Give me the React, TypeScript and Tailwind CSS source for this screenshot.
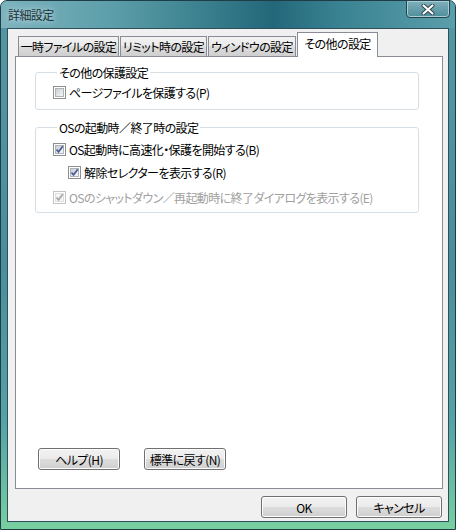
import React from "react";

type CheckProps = { checked?: boolean; disabled?: boolean };

const Check: React.FC<CheckProps> = ({ checked, disabled }) => (
  <span
    className={`flex h-[13px] w-[13px] shrink-0 items-center justify-center border bg-white ${
      disabled ? "border-[#c4c4c4]" : "border-[#8e8f8f]"
    }`}
  >
    <span
      className={`relative flex h-[9px] w-[9px] items-center justify-center border ${
        disabled
          ? "border-[#e0e0e0] bg-[#f4f4f4]"
          : "border-[#aeb3b9] bg-[linear-gradient(135deg,#cbcfd5,#f6f6f6)]"
      }`}
    >
      {checked && (
        <svg width="9" height="9" viewBox="0 0 9 9" className="absolute left-[-1px] top-[-1px]">
          <path
            d="M1.5 4.5 L3.5 6.8 L7.8 1.2"
            fill="none"
            stroke={disabled ? "#a8a8a8" : "#4a5f97"}
            strokeWidth="1.8"
          />
        </svg>
      )}
    </span>
  </span>
);

type RowProps = CheckProps & { label: string; indent?: boolean; className?: string };

const Row: React.FC<RowProps> = ({ label, checked, disabled, indent, className }) => (
  <div className={`flex h-[15px] items-center gap-[3px] ${indent ? "pl-[15px]" : ""} ${className ?? ""}`}>
    <Check checked={checked} disabled={disabled} />
    <span className={`whitespace-nowrap ${disabled ? "text-[#a0a0a0]" : "text-black"}`}>{label}</span>
  </div>
);

const Button: React.FC<{ label: string; className?: string }> = ({ label, className }) => (
  <button
    className={`flex h-[22px] items-center justify-center whitespace-nowrap rounded-[3px] border border-[#707070] bg-[linear-gradient(to_bottom,#f2f2f2_0%,#ebebeb_50%,#dddddd_50%,#cfcfcf_100%)] text-black shadow-[inset_0_0_0_1px_#fcfcfc] ${className ?? ""}`}
  >
    {label}
  </button>
);

const tabs = [
  { label: "一時ファイルの設定", w: "w-[101px]" },
  { label: "リミット時の設定", w: "w-[87px]" },
  { label: "ウィンドウの設定", w: "w-[88px]" },
];

export default function App() {
  return (
    <div className="h-[530px] w-[456px] font-['Noto_Sans_CJK_JP',sans-serif] text-[12px] leading-[15px] tracking-[-0.6px] [font-feature-settings:'palt']">
      <div className="flex h-full w-full flex-col rounded-t-[7px] border border-[#1f3c47] bg-[linear-gradient(180deg,#5596a3_0%,#4a8e9c_50%,#55a3a6_80%,#78cf9e_100%)]">
        {/* title bar */}
        <div className="flex h-[27px] shrink-0 justify-between rounded-t-[6px] bg-[linear-gradient(90deg,#7db3bd_0%,#5b9ea9_25%,#3a7f8d_45%,#23687a_60%,#3a8392_75%,#5b9eab_100%)]">
          <div className="pl-[7px] pt-[6px] text-[12px] text-[#22323a] [text-shadow:0_0_6px_#d9eef2]">
            詳細設定
          </div>
          <div className="mr-[5px] mt-[-1px] flex h-[18px] w-[44px] items-center justify-center rounded-b-[4px] border border-[#26444f] bg-[linear-gradient(to_bottom,#7fb0bb,#4f8e9b)] shadow-[inset_0_0_0_1px_#a9cdd4]">
            <svg width="14" height="11" viewBox="0 0 14 11">
              <path d="M2.5 1.5 L11.5 9.5 M11.5 1.5 L2.5 9.5" stroke="#2b3f46" strokeWidth="4" strokeLinecap="round" />
              <path d="M2.5 1.5 L11.5 9.5 M11.5 1.5 L2.5 9.5" stroke="#ffffff" strokeWidth="2.2" strokeLinecap="round" />
            </svg>
          </div>
        </div>

        {/* client area */}
        <div className="mx-[6px] mb-[7px] flex flex-1 flex-col border border-[#2e4f5b] bg-[#f0f0f0] pl-[7px] pr-[5px] pt-[3px]">
          {/* tab strip */}
          <div className="flex h-[24px] items-end pl-[3px]">
            {tabs.map((t) => (
              <div
                key={t.label}
                className={`${t.w} mr-[1px] flex h-[20px] items-center justify-center whitespace-nowrap border border-b-0 border-[#898c95] bg-[linear-gradient(to_bottom,#f2f2f2_0%,#ebebeb_50%,#dddddd_50%,#cfcfcf_100%)]`}
              >
                {t.label}
              </div>
            ))}
            <div className="relative z-10 mb-[-1px] flex h-[25px] w-[81px] items-start justify-center whitespace-nowrap border border-b-0 border-[#898c95] bg-white pt-[3px]">
              その他の設定
            </div>
          </div>

          {/* panel */}
          <div className="flex h-[433px] flex-col border border-[#898c95] bg-white pl-[19px] pr-[23px] pt-[8px]">
            <fieldset className="rounded-[3px] border border-[#d5dfe5] pb-[9px] pl-[17px] pt-[5px]">
              <legend className="ml-[4px] px-[2px]">その他の保護設定</legend>
              <Row label="ページファイルを保護する(P)" />
            </fieldset>

            <fieldset className="mt-[10px] rounded-[3px] border border-[#d5dfe5] pb-[7px] pl-[17px] pt-[7px]">
              <legend className="ml-[4px] px-[2px]">OSの起動時／終了時の設定</legend>
              <Row label="OS起動時に高速化・保護を開始する(B)" checked />
              <Row label="解除セレクターを表示する(R)" checked indent className="mt-[8px]" />
              <Row label="OSのシャットダウン／再起動時に終了ダイアログを表示する(E)" checked disabled className="mt-[10px]" />
            </fieldset>

            <div className="flex-1" />

            <div className="mb-[18px] flex gap-[24px] pl-[3px]">
              <Button label="ヘルプ(H)" className="w-[82px]" />
              <Button label="標準に戻す(N)" className="w-[82px]" />
            </div>
          </div>

          {/* bottom buttons */}
          <div className="mt-[7px] flex justify-end gap-[9px] pr-[1px]">
            <Button label="OK" className="w-[86px]" />
            <Button label="キャンセル" className="w-[86px]" />
          </div>
        </div>
      </div>
    </div>
  );
}
